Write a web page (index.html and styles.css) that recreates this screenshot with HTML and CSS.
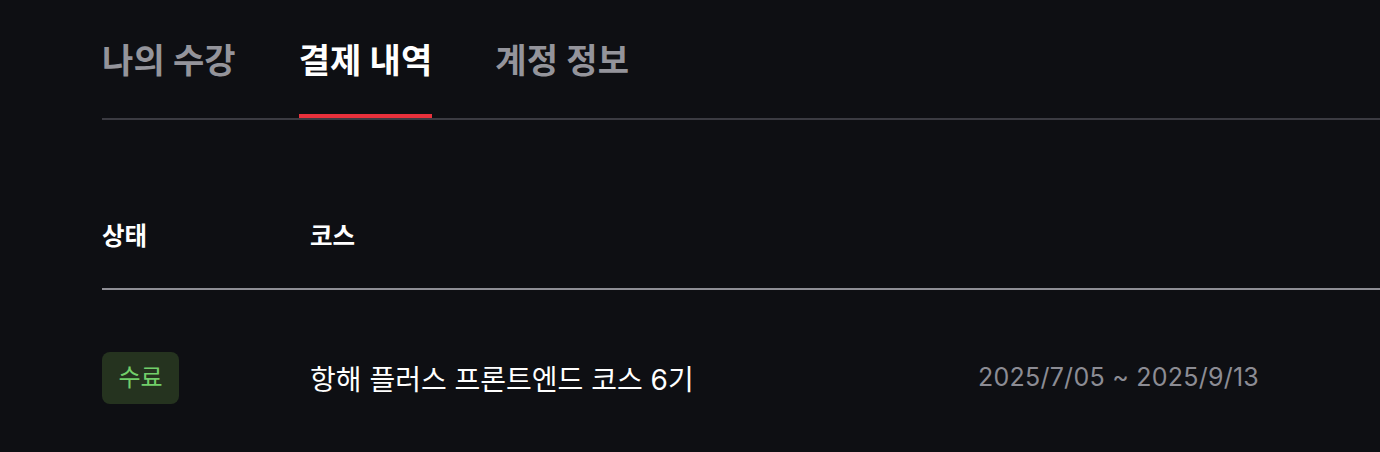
FILE: index.html
```html
<!DOCTYPE html>
<html lang="ko">
<head>
<meta charset="utf-8">
<link rel="stylesheet" href="styles.css">
</head>
<body>
<main class="page">
  <nav class="tabs">
    <a class="tab">나의 수강</a>
    <a class="tab active">결제 내역</a>
    <a class="tab">계정 정보</a>
  </nav>
  <section class="table">
    <div class="row head">
      <div class="cell">상태</div>
      <div class="cell">코스</div>
      <div class="cell"></div>
    </div>
    <div class="row body">
      <div class="cell"><span class="badge">수료</span></div>
      <div class="cell course">항해 플러스 프론트엔드 코스 6기</div>
      <div class="cell date">2025/7/05 ~ 2025/9/13</div>
    </div>
  </section>
</main>
</body>
</html>
```
FILE: styles.css
```css
html, body {
  margin: 0;
  padding: 0;
  background: #0e0f13;
  height: 100%;
}
body {
  font-family: "Inter", "Noto Sans CJK KR", sans-serif;
  color: #ffffff;
  overflow: hidden;
}
.page {
  padding-left: 102px;
  padding-top: 38px;
}
.tabs {
  display: flex;
  gap: 63px;
  border-bottom: 2px solid #3b3b42;
}
.tab {
  font-size: 34px;
  font-weight: 700;
  color: #94949b;
  line-height: 46px;
  padding-bottom: 30px;
  border-bottom: 4px solid transparent;
  letter-spacing: 0.1px;
}
.tab.active {
  color: #ffffff;
  border-bottom-color: #e8313c;
}
.table {
  margin-top: 100px;
}
.row {
  display: grid;
  grid-template-columns: 208px 668px 1fr;
  align-items: center;
}
.head {
  font-size: 24.5px;
  font-weight: 600;
  line-height: 32px;
  border-bottom: 2px solid #8e8e95;
  padding-bottom: 36px;
}
.body {
  padding-top: 62px;
}
.badge {
  display: inline-block;
  background: #25331f;
  color: #72cf6a;
  font-size: 24px;
  line-height: 52px;
  height: 52px;
  padding: 0 16.5px;
  border-radius: 8px;
}
.course {
  font-size: 28px;
}
.date {
  font-size: 25px;
  letter-spacing: 0.25px;
  color: #8c8c94;
  margin-top: -3px;
}
```
